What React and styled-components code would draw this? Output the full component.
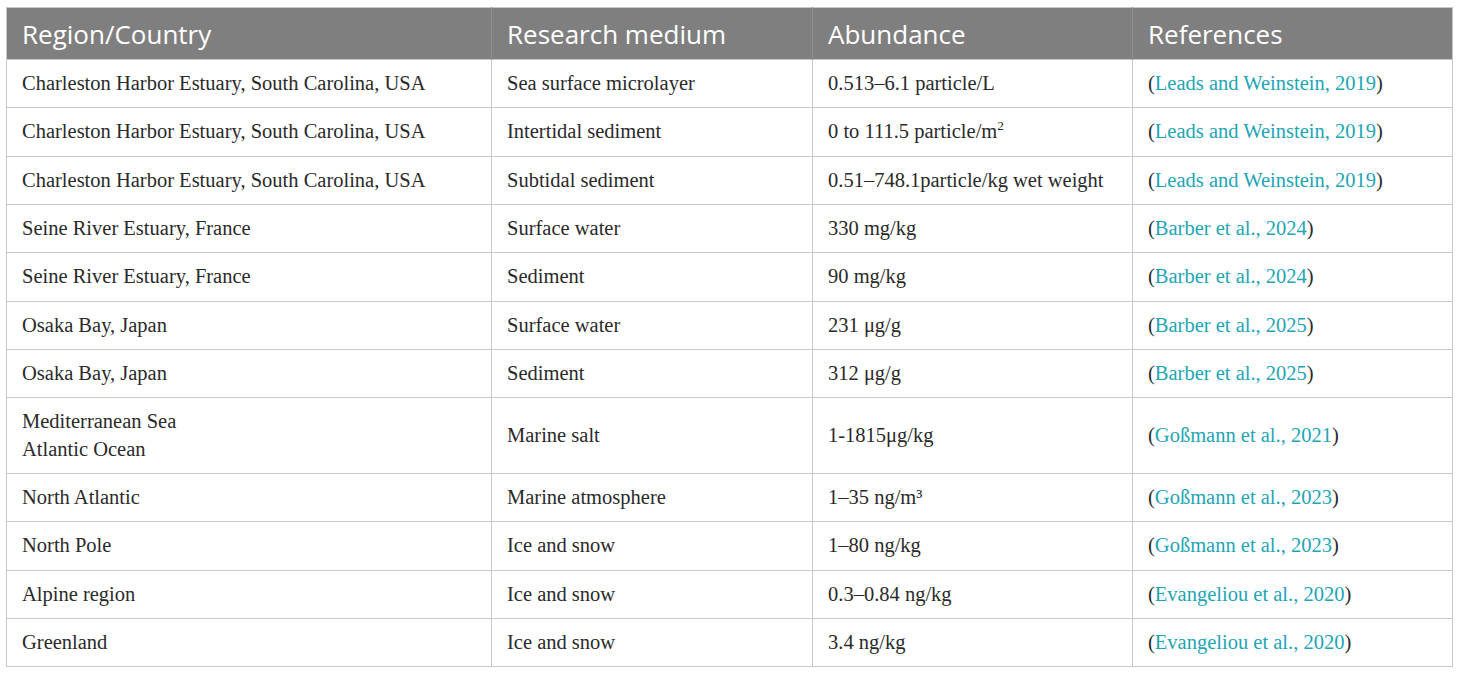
import React from "react";
import styled, { createGlobalStyle } from "styled-components";

const Global = createGlobalStyle`
  html, body { margin: 0; padding: 0; background: #ffffff; }
`;

const Page = styled.div`
  padding: 7px 8px 0 6px;
`;

const Table = styled.table`
  width: 1446px;
  border-collapse: collapse;
  table-layout: fixed;
  border: 1px solid #c8c8c8;
`;

const HeadCell = styled.th`
  background: #7f7f7f;
  color: #ffffff;
  font-family: "Open Sans", "Noto Sans", sans-serif;
  font-weight: 400;
  font-size: 26px;
  text-align: left;
  height: 52px;
  box-sizing: border-box;
  padding: 0 15px;
  border-left: 1px solid #8f8f8f;
  &:first-child { border-left: none; }
`;

const Cell = styled.td`
  font-family: "Liberation Serif", "DejaVu Serif", serif;
  font-size: 20.5px;
  color: #2a2a2a;
  line-height: 27.33px;
  padding: 10px 15px;
  vertical-align: middle;
  border: 1px solid #c8c8c8;
  white-space: nowrap;
`;

const Ref = styled.span`
  color: #1ea5b5;
`;

const Sup = styled.sup`
  font-size: 0.65em;
  line-height: 0;
`;

const rows = [
  ["Charleston Harbor Estuary, South Carolina, USA", "Sea surface microlayer", "0.513–6.1 particle/L", "Leads and Weinstein, 2019"],
  ["Charleston Harbor Estuary, South Carolina, USA", "Intertidal sediment", <>0 to 111.5 particle/m<Sup>2</Sup></>, "Leads and Weinstein, 2019"],
  ["Charleston Harbor Estuary, South Carolina, USA", "Subtidal sediment", "0.51–748.1particle/kg wet weight", "Leads and Weinstein, 2019"],
  ["Seine River Estuary, France", "Surface water", "330 mg/kg", "Barber et al., 2024"],
  ["Seine River Estuary, France", "Sediment", "90 mg/kg", "Barber et al., 2024"],
  ["Osaka Bay, Japan", "Surface water", "231 μg/g", "Barber et al., 2025"],
  ["Osaka Bay, Japan", "Sediment", "312 μg/g", "Barber et al., 2025"],
  [<>Mediterranean Sea<br />Atlantic Ocean</>, "Marine salt", "1-1815μg/kg", "Goßmann et al., 2021"],
  ["North Atlantic", "Marine atmosphere", "1–35 ng/m³", "Goßmann et al., 2023"],
  ["North Pole", "Ice and snow", "1–80 ng/kg", "Goßmann et al., 2023"],
  ["Alpine region", "Ice and snow", "0.3–0.84 ng/kg", "Evangeliou et al., 2020"],
  ["Greenland", "Ice and snow", "3.4 ng/kg", "Evangeliou et al., 2020"],
];

export default function App() {
  return (
    <>
      <Global />
      <Page>
        <Table>
          <colgroup>
            <col style={{ width: 485 }} />
            <col style={{ width: 321 }} />
            <col style={{ width: 320 }} />
            <col style={{ width: 320 }} />
          </colgroup>
          <thead>
            <tr>
              <HeadCell>Region/Country</HeadCell>
              <HeadCell>Research medium</HeadCell>
              <HeadCell>Abundance</HeadCell>
              <HeadCell>References</HeadCell>
            </tr>
          </thead>
          <tbody>
            {rows.map((r, i) => (
              <tr key={i}>
                <Cell>{r[0]}</Cell>
                <Cell>{r[1]}</Cell>
                <Cell>{r[2]}</Cell>
                <Cell>(<Ref>{r[3]}</Ref>)</Cell>
              </tr>
            ))}
          </tbody>
        </Table>
      </Page>
    </>
  );
}
